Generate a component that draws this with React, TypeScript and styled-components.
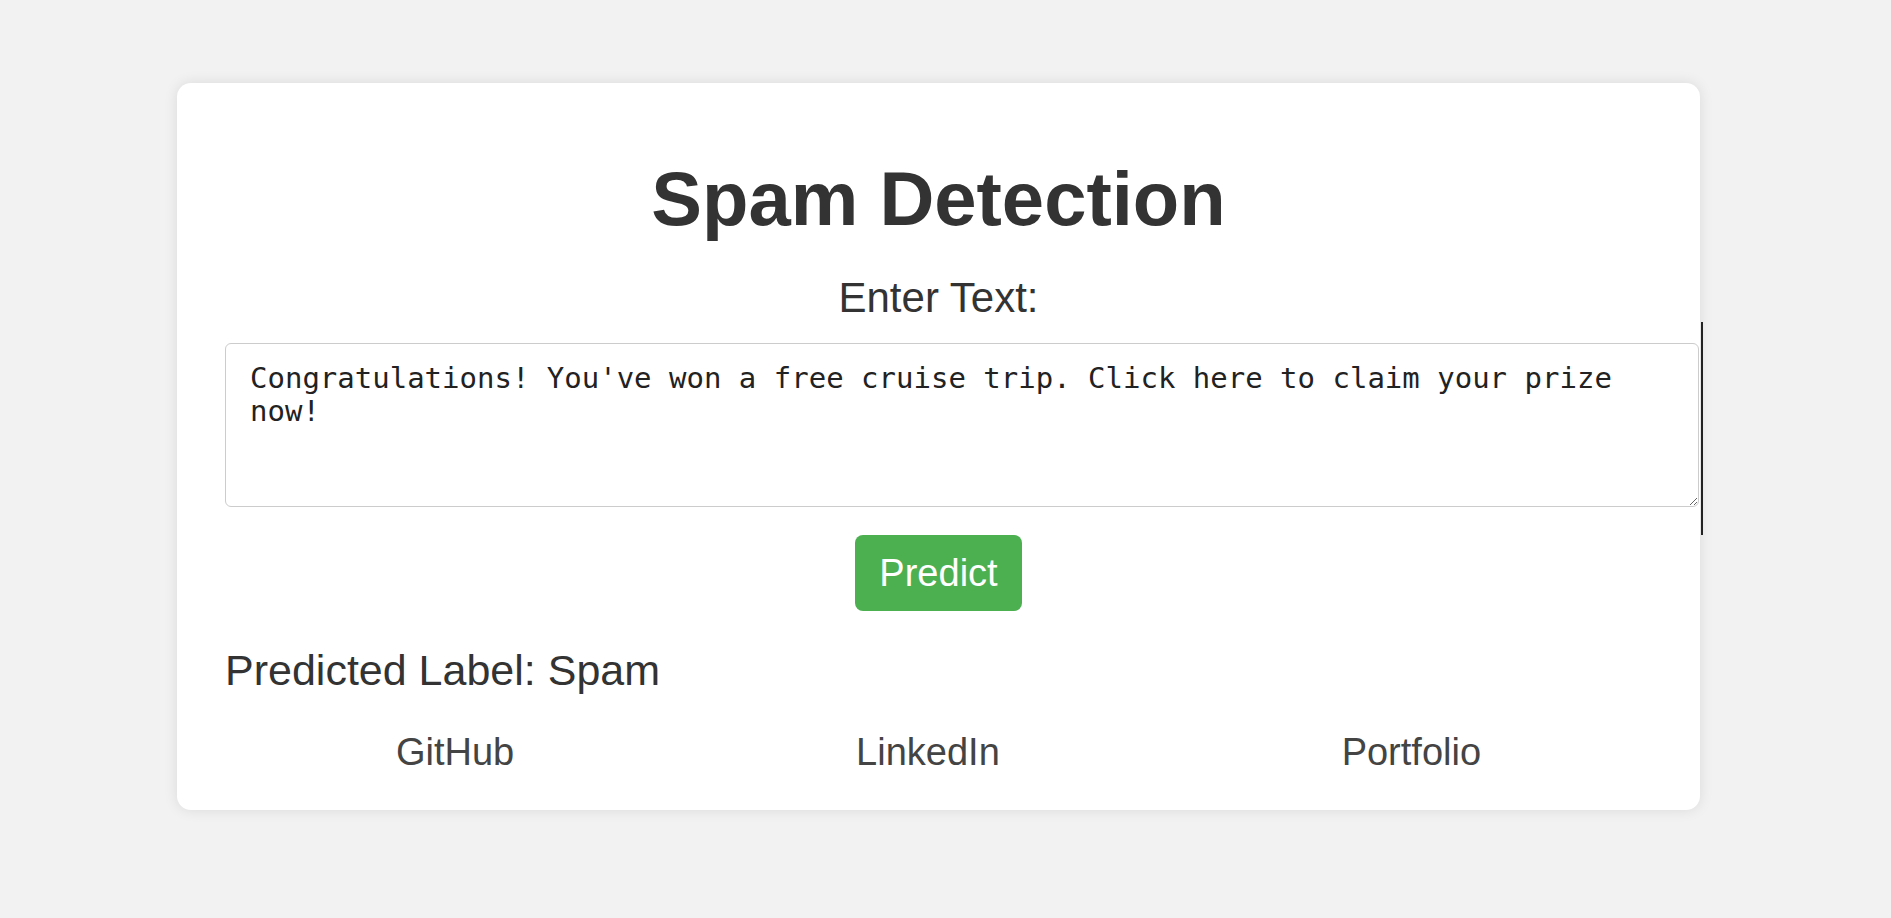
import React from "react";
import styled, { createGlobalStyle } from "styled-components";

const GlobalStyle = createGlobalStyle`
  html, body {
    margin: 0;
    padding: 0;
    background: #f2f2f2;
    font-family: "Liberation Sans", Arial, sans-serif;
  }
`;

const Page = styled.div`
  padding: 83px 0 0 177px;
  min-height: 918px;
  box-sizing: border-box;
`;

const Card = styled.main`
  position: relative;
  width: 1523px;
  box-sizing: border-box;
  background: #ffffff;
  border-radius: 14px;
  box-shadow: 0 0 14px rgba(0, 0, 0, 0.1);
  padding: 73px 48px 36px;
  display: flex;
  flex-direction: column;
`;

const Title = styled.h1`
  margin: 0;
  font-size: 76px;
  line-height: 86px;
  font-weight: 700;
  color: #333333;
  text-align: center;
`;

const FieldLabel = styled.label`
  margin-top: 32px;
  font-size: 42px;
  line-height: 48px;
  color: #333333;
  text-align: center;
`;

const TextArea = styled.textarea`
  margin-top: 21px;
  width: 1474px;
  height: 164px;
  box-sizing: border-box;
  padding: 18px 24px;
  border: 1px solid #cccccc;
  border-radius: 6px;
  font-family: "DejaVu Sans Mono", "Liberation Mono", monospace;
  font-size: 29px;
  line-height: 33px;
  color: #222222;
  background: #ffffff;
  outline: none;
`;

const Cursor = styled.span`
  position: absolute;
  left: calc(100% + 1px);
  top: 239px;
  width: 2px;
  height: 213px;
  background: #222222;
`;

const ButtonRow = styled.div`
  margin-top: 28px;
  display: flex;
  justify-content: center;
`;

const PredictButton = styled.button`
  background: #4caf50;
  color: #ffffff;
  border: none;
  border-radius: 8px;
  padding: 16px 24px;
  font-family: "Liberation Sans", Arial, sans-serif;
  font-size: 38px;
  line-height: 44px;
  cursor: pointer;
`;

const Result = styled.p`
  margin: 35px 0 0;
  font-size: 43px;
  line-height: 48px;
  color: #333333;
`;

const Links = styled.nav`
  margin-top: 36px;
  display: flex;
  justify-content: space-around;
`;

const LinkItem = styled.a`
  font-size: 38px;
  line-height: 44px;
  color: #444444;
  text-decoration: none;
`;

export default function App() {
  return (
    <>
      <GlobalStyle />
      <Page>
        <Card>
          <Title>Spam Detection</Title>
          <FieldLabel htmlFor="msg">Enter Text:</FieldLabel>
          <TextArea
            id="msg"
            defaultValue="Congratulations! You've won a free cruise trip. Click here to claim your prize now!"
          />
          <Cursor />
          <ButtonRow>
            <PredictButton type="button">Predict</PredictButton>
          </ButtonRow>
          <Result>Predicted Label: Spam</Result>
          <Links>
            <LinkItem href="#">GitHub</LinkItem>
            <LinkItem href="#">LinkedIn</LinkItem>
            <LinkItem href="#">Portfolio</LinkItem>
          </Links>
        </Card>
      </Page>
    </>
  );
}
